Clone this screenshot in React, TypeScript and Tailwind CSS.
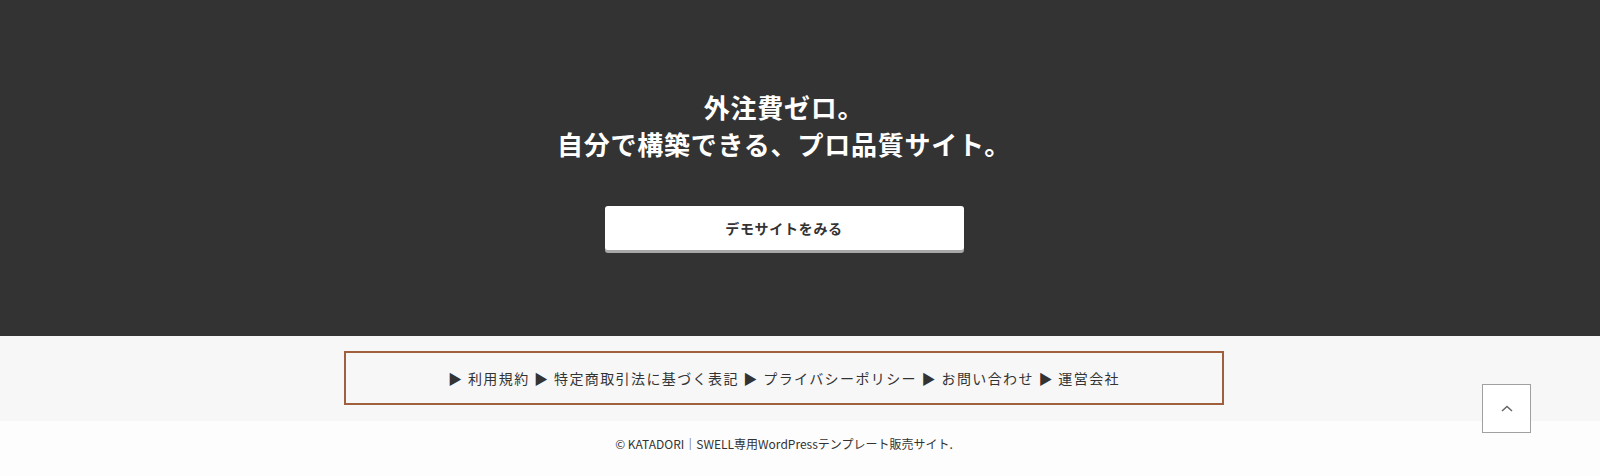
import React from "react";

const font = { fontFamily: '"Noto Sans CJK JP", "Noto Sans", sans-serif' };

export default function App() {
  return (
    <div className="relative w-[1600px] h-[476px] overflow-hidden bg-white text-[#333]" style={font}>
      <section className="bg-[#333333] h-[336px]">
        <div className="w-[1568px] flex flex-col items-center pt-[88px]">
          <h2 className="text-white font-bold text-[26px] leading-[37px] text-center tracking-[0.03em]">
            外注費ゼロ。
            <br />
            自分で構築できる、プロ品質サイト。
          </h2>
          <a className="mt-[44px] w-[359px] h-[44px] bg-white rounded-[3px] shadow-[0_3px_0_#a8a8a8] flex items-center justify-center text-[14px] font-bold text-[#333] tracking-[0.05em]">
            デモサイトをみる
          </a>
        </div>
      </section>
      <section className="bg-[#f7f7f7] h-[85px]">
        <div className="w-[1568px] flex justify-center pt-[15px]">
          <div className="w-[880px] h-[54px] border-2 border-[#a0603e] flex items-center justify-center text-[14px] text-[#333] tracking-[0.1em]">
            <span>▶ 利用規約 ▶ 特定商取引法に基づく表記 ▶ プライバシーポリシー ▶ お問い合わせ ▶ 運営会社</span>
          </div>
        </div>
      </section>
      <footer className="bg-[#fdfdfd] h-[55px]">
        <div className="w-[1568px] flex justify-center pt-[14px] text-[12px] text-[#333]">
          © KATADORI｜SWELL専用WordPressテンプレート販売サイト.
        </div>
      </footer>
      <button className="absolute left-[1482px] top-[384px] w-[49px] h-[49px] bg-white border border-[#a0a0a0] flex items-center justify-center">
        <svg width="14" height="10" viewBox="0 0 14 10" fill="none" stroke="#666" strokeWidth="1.5">
          <path d="M2 7 L7 2.5 L12 7" />
        </svg>
      </button>
    </div>
  );
}
